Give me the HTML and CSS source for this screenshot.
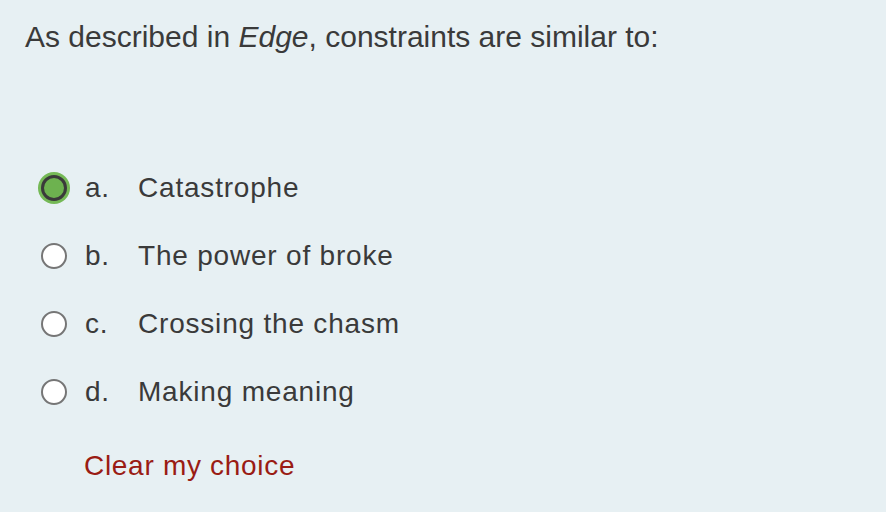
FILE: index.html
```html
<!DOCTYPE html>
<html lang="en">
  <head>
    <meta charset="UTF-8" />
    <meta name="viewport" content="width=device-width, initial-scale=1.0" />
    <title>Question</title>
    <link rel="stylesheet" href="styles.css">
  </head>
  <body>
    <main class="question">
      <p class="prompt">As described in <em>Edge</em>, constraints are similar to:</p>

      <div class="answers">
        <label class="answer">
          <span class="radio is-checked"></span>
          <span class="letter">a.</span>
          <span class="text">Catastrophe</span>
        </label>
        <label class="answer">
          <span class="radio"></span>
          <span class="letter">b.</span>
          <span class="text">The power of broke</span>
        </label>
        <label class="answer">
          <span class="radio"></span>
          <span class="letter">c.</span>
          <span class="text">Crossing the chasm</span>
        </label>
        <label class="answer">
          <span class="radio"></span>
          <span class="letter">d.</span>
          <span class="text">Making meaning</span>
        </label>
      </div>

      <a class="clear" href="#">Clear my choice</a>
    </main>
  </body>
</html>
```

FILE: styles.css
```css
*,
*::before,
*::after {
  box-sizing: border-box;
  margin: 0;
  padding: 0;
}
html {
  font-family: "Liberation Sans", Arial, sans-serif;
}
body {
  min-height: 100vh;
  background-color: #e7f0f3;
  color: #3a3a3a;
  overflow: hidden;
}
.question {
  padding: 19px 25px 0;
  display: flex;
  flex-direction: column;
}
.prompt {
  font-size: 30px;
  line-height: 36px;
  & em {
    font-style: italic;
  }
}
.answers {
  margin-top: 117px;
  display: flex;
  flex-direction: column;
  gap: 36px;
}
.answer {
  display: flex;
  align-items: center;
  font-size: 28px;
  line-height: 32px;
  letter-spacing: 0.8px;
  padding-left: 16px;
  cursor: pointer;

  & .letter {
    width: 53px;
    margin-left: 18px;
  }
}
.radio {
  width: 26px;
  height: 26px;
  border-radius: 50%;
  border: 2px solid #767676;
  background-color: #fff;
  flex-shrink: 0;

  &.is-checked {
    border: 3px solid #3a3a3a;
    background-color: #6db24f;
    box-shadow: 0 0 0 3px #75b956;
  }
}
.clear {
  margin-top: 42px;
  margin-left: 59px;
  font-size: 28px;
  letter-spacing: 0.7px;
  color: #9a1c14;
  text-decoration: none;
}
```
